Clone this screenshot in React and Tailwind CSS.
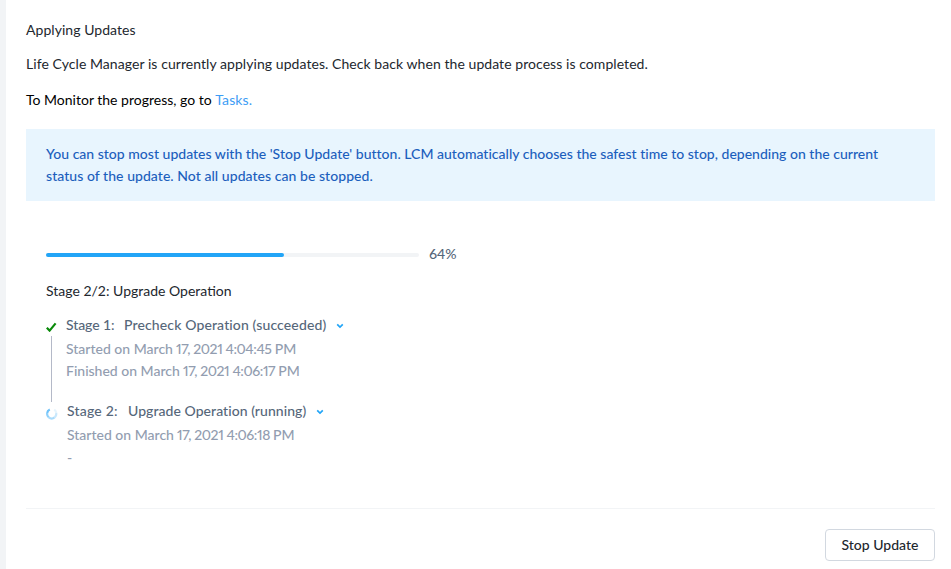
import React from "react";

function Chevron() {
  return (
    <svg className="ml-[10px] mt-px h-[8px] w-[8px] shrink-0" viewBox="0 0 8 8" fill="none">
      <path d="M1.2 2.4L4 5L6.8 2.4" stroke="#22a5f7" strokeWidth="1.7" />
    </svg>
  );
}

function Check() {
  return (
    <svg className="h-[10px] w-[11px] shrink-0" viewBox="0 0 11 10" fill="none">
      <path d="M0.8 5.8L3.6 8.6L9.6 1.4" stroke="#0a8a0a" strokeWidth="2.2" />
    </svg>
  );
}

function Spinner() {
  return (
    <svg className="h-[12px] w-[12px]" viewBox="0 0 12 12" fill="none" strokeWidth="2.2">
      <path d="M3.8 1.4A4.6 4.6 0 0 0 1.2 5" stroke="#6fc3fa" />
      <path d="M1.2 5A4.6 4.6 0 0 0 2.8 9.4" stroke="#8dd0fb" />
      <path d="M2.8 9.4A4.6 4.6 0 0 0 8.6 9.4" stroke="#a9dbfb" />
      <path d="M8.6 9.4A4.6 4.6 0 0 0 10.2 5" stroke="#c9e8fc" />
      <path d="M10.2 5A4.6 4.6 0 0 0 8.2 1.6" stroke="#e6f4fd" />
    </svg>
  );
}

function Stamp({ label, day, time }) {
  return (
    <p className="proportional-nums">
      {label} on March<span className="tracking-[-0.4px]"> {day} </span>
      <span className="tracking-[-0.42px]">2021 {time} </span>PM
    </p>
  );
}

export default function App() {
  return (
    <div className="flex h-[569px] w-[951px] overflow-hidden whitespace-nowrap bg-white font-['Lato',sans-serif] text-[14px] leading-[22px] text-[#22272e]">
      <div className="w-[6px] shrink-0 bg-[#f2f4f6]" />
      <main className="flex w-[929px] flex-col pl-5 pt-[19px]">
        <h1 className="tracking-[0.05px]">Applying Updates</h1>
        <p className="mt-3 tracking-[0.062px]">Life Cycle Manager is currently applying updates. Check back when the update process is completed.</p>
        <p className="mt-[14px] text-black">
          To Monitor the progress, go to <a className="tracking-[0.15px] text-[#3d9df5]">Tasks.</a>
        </p>
        <div className="mt-[18px] h-[72px] bg-[#e8f5fe] px-5 pt-[14px] font-medium text-[#1c5fbd]">
          <p className="tracking-[0.01px]">You can stop most updates with the 'Stop Update' button. LCM automatically chooses the safest time to stop, depending on the current</p>
          <p className="tracking-[0.05px]">status of the update. Not all updates can be stopped.</p>
        </div>
        <section className="flex flex-col pl-5 pt-[42px]">
          <div className="flex items-center">
            <div className="mt-px h-1 w-[373px] overflow-hidden rounded-full bg-[#f2f4f6]">
              <div className="h-full w-[238px] rounded-r-full bg-[#22a5f7]" />
            </div>
            <span className="ml-[10px] font-medium text-[#56677a]">64%</span>
          </div>
          <h2 className="mt-[15px]">Stage 2/2: Upgrade Operation</h2>
          <div className="mt-3 flex h-[86px]">
            <div className="flex w-5 shrink-0 flex-col pt-2">
              <Check />
              <div className="ml-[5px] mt-[4px] h-[66px] w-px shrink-0 bg-[#b4b9c8]" />
            </div>
            <div className="font-medium text-[#929db0]">
              <div className="mb-0.5 flex items-center text-[#56677a]">
                <span className="w-[58px] tracking-[-0.1px]">Stage 1:</span>
                <span className="tracking-[0.13px]">Precheck Operation (succeeded)</span>
                <Chevron />
              </div>
              <Stamp label="Started" day="17," time="4:04:45" />
              <Stamp label="Finished" day="17," time="4:06:17" />
            </div>
          </div>
          <div className="flex h-[86px]">
            <div className="w-[21px] shrink-0 pt-[8px]"><Spinner /></div>
            <div className="font-medium text-[#929db0]">
              <div className="mb-0.5 flex items-center text-[#56677a]">
                <span className="w-[61px] tracking-[0.2px]">Stage 2:</span>
                <span className="tracking-[0.05px]">Upgrade Operation (running)</span>
                <Chevron />
              </div>
              <Stamp label="Started" day="17," time="4:06:18" />
              <p className="pt-px">-</p>
            </div>
          </div>
        </section>
        <footer className="mt-[22px] flex justify-end border-t border-[#f2f4f6] pt-5">
          <button className="h-8 w-[110px] rounded-[4px] border border-[#d2d8e0] font-medium">Stop Update</button>
        </footer>
      </main>
    </div>
  );
}
